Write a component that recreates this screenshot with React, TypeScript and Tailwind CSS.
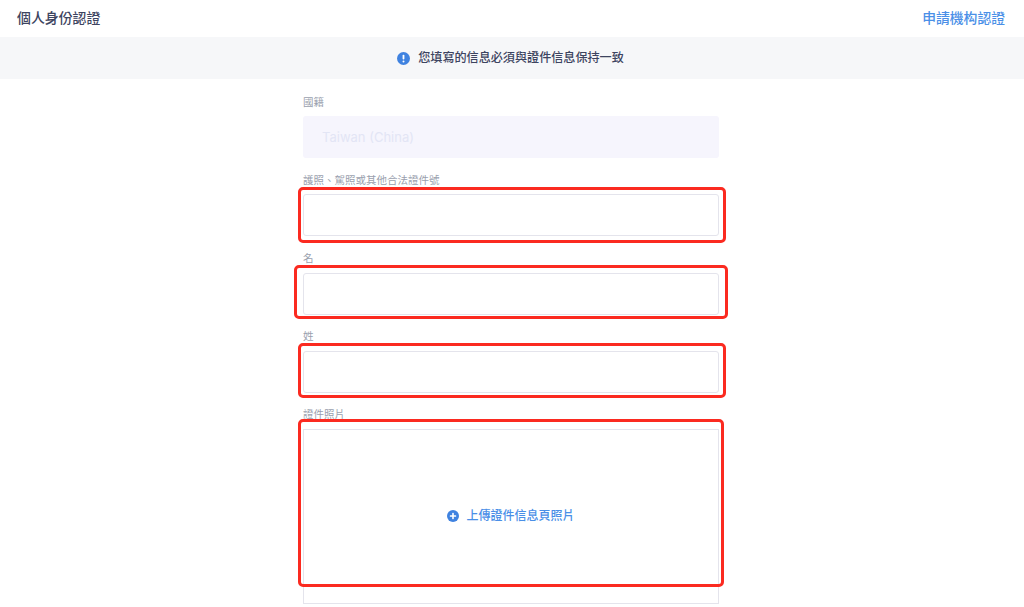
import { ReactNode } from 'react'

const fontStack = "font-['Inter','Noto_Sans_CJK_TC',sans-serif]"

const Field = ({
  label,
  children,
  mark,
  labelClass,
}: {
  label: string
  children: ReactNode
  mark?: string
  labelClass: string
}) => (
  <div className="relative">
    <div className={`text-[10.5px] leading-[14px] text-[#9a9fae] ${labelClass}`}>{label}</div>
    {children}
    {mark && <div className={`absolute rounded-[5px] border-[3px] border-[#fb2a20] ${mark}`} />}
  </div>
)

const TextBox = () => (
  <div className="h-[42px] rounded-[3px] border border-[#e4e4ec] bg-white" />
)

export default function App() {
  return (
    <div className={`h-[607px] w-[1024px] overflow-hidden bg-white ${fontStack}`}>
      <div className="flex h-[37px] items-center justify-between pb-[1px] pl-[17px] pr-[19px]">
        <span className="text-[13.9px] font-medium text-[#3d4460]">個人身份認證</span>
        <span className="text-[13.8px] font-medium text-[#4a8fe7]">申請機构認證</span>
      </div>
      <div className="flex h-[42px] items-center justify-center gap-[8px] bg-[#f6f7f9] pr-[3px]">
        <svg width="13" height="13" viewBox="0 0 13 13">
          <circle cx="6.5" cy="6.5" r="6.5" fill="#3f82e0" />
          <rect x="5.6" y="2.8" width="1.8" height="4.8" rx="0.8" fill="#fff" />
          <circle cx="6.5" cy="9.5" r="1" fill="#fff" />
        </svg>
        <span className="text-[12.1px] font-medium text-[#3d4460]">您填寫的信息必須與證件信息保持一致</span>
      </div>
      <div className="ml-[303px] w-[416px]">
        <Field label="國籍" labelClass="pt-[17px] pb-[6px]">
          <div className="flex h-[42px] items-center rounded-[3px] bg-[#f6f5fd] pl-[19px] pt-[1px] text-[13px] text-[#e3e5f5]">
            Taiwan (China)
          </div>
        </Field>
        <Field label="護照、駕照或其他合法證件號" labelClass="pt-[16px] pb-[6px]" mark="left-[-5px] right-[-7px] top-[29px] h-[56px]">
          <TextBox />
        </Field>
        <Field label="名" labelClass="pt-[16px] pb-[7px]" mark="left-[-9px] right-[-9px] top-[29px] bottom-[-4px]">
          <TextBox />
        </Field>
        <Field label="姓" labelClass="pt-[15px] pb-[7px]" mark="left-[-5px] right-[-7px] top-[28px] bottom-[-5px]">
          <TextBox />
        </Field>
        <Field label="證件照片" labelClass="pt-[15px] pb-[7px]" mark="left-[-5px] right-[-5px] top-[26px] h-[168px]">
          <div className="flex h-[175px] items-center justify-center gap-[7px] border border-[#e4e4ec] bg-white pb-[1px]">
            <svg width="12" height="12" viewBox="0 0 12 12">
              <circle cx="6" cy="6" r="6" fill="#3f82e0" />
              <rect x="2.8" y="5.2" width="6.4" height="1.6" rx="0.6" fill="#fff" />
              <rect x="5.2" y="2.8" width="1.6" height="6.4" rx="0.6" fill="#fff" />
            </svg>
            <span className="text-[12px] font-medium text-[#4a8fe7]">上傳證件信息頁照片</span>
          </div>
        </Field>
      </div>
    </div>
  )
}
